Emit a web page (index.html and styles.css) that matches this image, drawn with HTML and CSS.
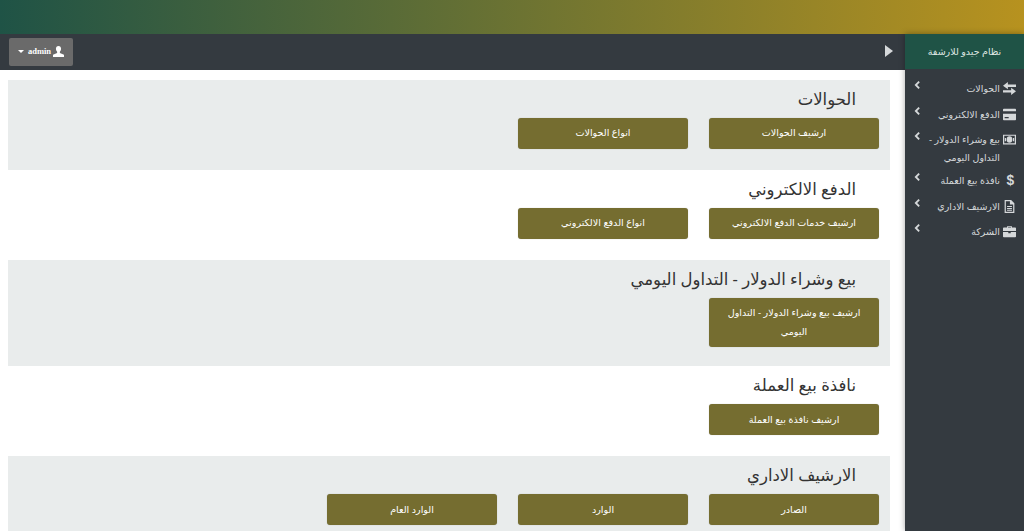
FILE: index.html
```html
<!DOCTYPE html>
<html lang="ar" dir="rtl">
<head>
<meta charset="utf-8">
<title>نظام جيدو للارشفة</title>
<link rel="stylesheet" href="styles.css">
</head>
<body>
<div class="topbar"></div>
<div class="shell">
  <aside class="sidebar">
    <div class="brand">نظام جيدو للارشفة</div>
    <nav class="menu">
      <a class="item"><svg class="ico" viewBox="0 0 16 16"><path d="M6 0v3h10v3H6v3L0 4.500zM10 7v3H0v3h10v3l6-4.500z" fill="#d5d8da"/></svg><span class="label">الحوالات</span><svg class="chev" viewBox="0 0 8 12"><path d="M6 2 2 6l4 4" fill="none" stroke="#d5d8da" stroke-width="2.200"/></svg></a>
      <a class="item"><svg class="ico" viewBox="0 0 16 16"><path d="M1 1h14a1 1 0 0 1 1 1v12a1 1 0 0 1-1 1H1a1 1 0 0 1-1-1V2a1 1 0 0 1 1-1zm-1 3v3h16V4zm2 7v1.500h5V11z" fill="#d5d8da" fill-rule="evenodd"/></svg><span class="label">الدفع الالكتروني</span><svg class="chev" viewBox="0 0 8 12"><path d="M6 2 2 6l4 4" fill="none" stroke="#d5d8da" stroke-width="2.200"/></svg></a>
      <a class="item"><svg class="ico" viewBox="0 0 16 16"><path d="M0 2h16v12H0zm1.500 1.500v9h13v-9z" fill="#d5d8da" fill-rule="evenodd"/><ellipse cx="8" cy="8" rx="3.500" ry="4" fill="#d5d8da"/><path d="M3 6v4M13 6v4" stroke="#d5d8da" stroke-width="1.500"/></svg><span class="label">بيع وشراء الدولار - التداول اليومي</span><svg class="chev" viewBox="0 0 8 12"><path d="M6 2 2 6l4 4" fill="none" stroke="#d5d8da" stroke-width="2.200"/></svg></a>
      <a class="item"><svg class="ico" viewBox="0 0 16 16"><text x="9" y="14" text-anchor="middle" class="dollar">$</text></svg><span class="label">نافذة بيع العملة</span><svg class="chev" viewBox="0 0 8 12"><path d="M6 2 2 6l4 4" fill="none" stroke="#d5d8da" stroke-width="2.200"/></svg></a>
      <a class="item"><svg class="ico" viewBox="0 0 16 16"><path d="M2 0h8l4 4v12H2zM3.500 1.500v13h9V5.500H8.500v-4zM5 7.500h6v1.200H5zm0 2.300h6V11H5zm0 2.200h6v1.200H5z" fill="#d5d8da" fill-rule="evenodd"/></svg><span class="label">الارشيف الاداري</span><svg class="chev" viewBox="0 0 8 12"><path d="M6 2 2 6l4 4" fill="none" stroke="#d5d8da" stroke-width="2.200"/></svg></a>
      <a class="item"><svg class="ico" viewBox="0 0 16 16"><path d="M5 3V1.500h6V3h4a1 1 0 0 1 1 1v3.500H0V4a1 1 0 0 1 1-1zm1.200 0h3.600v-.400H6.200zM0 8.500h6.500V10h3V8.500H16V14a1 1 0 0 1-1 1H1a1 1 0 0 1-1-1z" fill="#d5d8da" fill-rule="evenodd"/></svg><span class="label">الشركة</span><svg class="chev" viewBox="0 0 8 12"><path d="M6 2 2 6l4 4" fill="none" stroke="#d5d8da" stroke-width="2.200"/></svg></a>
    </nav>
  </aside>
  <div class="main">
    <header class="header">
      <svg class="toggle" viewBox="0 0 8 12"><path d="M0 0 8 6 0 12z" fill="#d5d8da"/></svg>
      <button class="user"><svg class="user-ico" viewBox="0 0 12 12"><path d="M6 0c1.800 0 2.800 1.300 2.800 3 0 1.300-.5 2.500-1.300 3.200V7.500L12 9.500V12H0V9.500l4.500-2V6.200C3.700 5.500 3.200 4.300 3.200 3 3.200 1.300 4.200 0 6 0z" fill="#fff"/></svg><span dir="ltr">admin</span><span class="caret"></span></button>
    </header>
    <section class="sec alt">
      <h2>الحوالات</h2>
      <div class="btns"><a class="btn">ارشيف الحوالات</a><a class="btn">انواع الحوالات</a></div>
    </section>
    <section class="sec">
      <h2>الدفع الالكتروني</h2>
      <div class="btns"><a class="btn">ارشيف خدمات الدفع الالكتروني</a><a class="btn">انواع الدفع الالكتروني</a></div>
    </section>
    <section class="sec alt">
      <h2>بيع وشراء الدولار - التداول اليومي</h2>
      <div class="btns"><a class="btn">ارشيف بيع وشراء الدولار - التداول اليومي</a></div>
    </section>
    <section class="sec">
      <h2>نافذة بيع العملة</h2>
      <div class="btns"><a class="btn">ارشيف نافذة بيع العملة</a></div>
    </section>
    <section class="sec alt">
      <h2>الارشيف الاداري</h2>
      <div class="btns"><a class="btn">الصادر</a><a class="btn">الوارد</a><a class="btn">الوارد العام</a></div>
    </section>
  </div>
</div>
</body>
</html>
```
FILE: styles.css
```css
* { box-sizing: border-box; }
html, body { margin: 0; height: 531px; overflow: hidden; }
body { font-family: "Noto Sans", "DejaVu Sans", sans-serif; background: #fff; color: #333; }
.topbar { height: 34px; background: linear-gradient(to right, #1f5346, #b7921f); }
.shell { display: flex; height: 497px; }
.sidebar { width: 119px; flex: none; background: #343a40; color: #d5d8da; box-shadow: 0 0 6px rgba(0,0,0,.35); z-index: 1; }
.brand { height: 35px; background: #1f5346; color: #dfe6e3; font-size: 9.500px; display: flex; align-items: center; justify-content: center; }
.menu { padding-top: 6px; }
.item { display: flex; align-items: flex-start; padding: 5px 8px 0 9px; gap: 3px; font-size: 9.500px; line-height: 18px; min-height: 25.500px; }
.ico { width: 13px; height: 13px; flex: none; margin-top: 2px; overflow: visible; }
.dollar { font: bold 17px "Liberation Sans", sans-serif; fill: #d5d8da; }
.label { flex: 1; }
.chev { width: 7px; height: 10px; flex: none; margin-top: 0; }
.main { flex: 1; min-width: 0; }
.header { height: 36px; background: #343a40; display: flex; align-items: center; justify-content: space-between; padding: 0 12px 0 9px; }
.toggle { width: 8px; height: 12px; margin-top: -3px; }
.user { display: flex; align-items: center; gap: 2px; width: 64px; height: 28px; justify-content: center; background: #6a6a6a; border: 0; border-radius: 2px; color: #fff; font: bold 8.500px "Liberation Serif", serif; padding: 0 0 2px; }
.user-ico { width: 11px; height: 11px; }
.caret { width: 0; height: 0; border: 3px solid transparent; border-top-color: #fff; border-bottom: 0; margin-right: 2px; }
.sec { padding: 8px 11px 19.100px 8px; margin-left: 8px; margin-right: 15px; }
.sec:first-of-type { margin-top: 9.600px; }
.alt { background: #e9ecec; }
h2 { margin: 0 23px 8px 0; font-size: 16.500px; line-height: 22px; font-weight: 400; color: #333; }
.btns { display: flex; gap: 21px; min-height: 33px; align-items: flex-start; }
.btn { width: 170px; min-height: 31px; padding: 5px 18px; background: #756d30; color: #fff; font-size: 9.600px; line-height: 19.500px; text-align: center; border-radius: 3px; display: flex; align-items: center; justify-content: center; box-shadow: 0 0 1px rgba(0,0,0,.3); }
```
